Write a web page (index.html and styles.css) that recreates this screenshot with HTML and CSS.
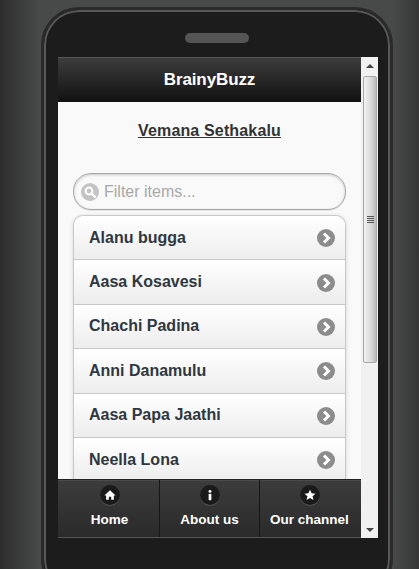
FILE: index.html
```html
<!DOCTYPE html>
<html lang="en">
<head>
    <meta charset="UTF-8">
    <meta name="viewport" content="width=device-width, initial-scale=1.0">
    <title>BrainyBuzz</title>
    <link rel="stylesheet" href="styles.css">
</head>
<body>
    <div class="stage">
    <div class="phone">
        <div class="speaker"></div>
        <div class="screen">
            <div class="page">
                <div class="header">BrainyBuzz</div>
                <div class="content">
                    <h2 class="book-title">Vemana Sethakalu</h2>

                    <div class="filter">
                        <span class="filter-icon">
                            <svg width="18" height="18" viewBox="0 0 18 18">
                                <circle cx="9" cy="9" r="9" fill="#c4c4c4"/>
                                <circle cx="8" cy="8" r="3.4" fill="none" stroke="#fff" stroke-width="2"/>
                                <path d="M10.5 10.5L14 14" stroke="#fff" stroke-width="2.4" stroke-linecap="round"/>
                            </svg>
                        </span>
                        <span class="filter-text">Filter items...</span>
                    </div>

                    <ul class="list">
                        <li class="list-item">Alanu bugga <span class="arrow"><svg width="18" height="18" viewBox="0 0 18 18"><path d="M7 4.5L11.5 9L7 13.5" fill="none" stroke="#fff" stroke-width="3"/></svg></span></li>
                        <li class="list-item">Aasa Kosavesi <span class="arrow"><svg width="18" height="18" viewBox="0 0 18 18"><path d="M7 4.5L11.5 9L7 13.5" fill="none" stroke="#fff" stroke-width="3"/></svg></span></li>
                        <li class="list-item">Chachi Padina <span class="arrow"><svg width="18" height="18" viewBox="0 0 18 18"><path d="M7 4.5L11.5 9L7 13.5" fill="none" stroke="#fff" stroke-width="3"/></svg></span></li>
                        <li class="list-item">Anni Danamulu <span class="arrow"><svg width="18" height="18" viewBox="0 0 18 18"><path d="M7 4.5L11.5 9L7 13.5" fill="none" stroke="#fff" stroke-width="3"/></svg></span></li>
                        <li class="list-item">Aasa Papa Jaathi <span class="arrow"><svg width="18" height="18" viewBox="0 0 18 18"><path d="M7 4.5L11.5 9L7 13.5" fill="none" stroke="#fff" stroke-width="3"/></svg></span></li>
                        <li class="list-item">Neella Lona <span class="arrow"><svg width="18" height="18" viewBox="0 0 18 18"><path d="M7 4.5L11.5 9L7 13.5" fill="none" stroke="#fff" stroke-width="3"/></svg></span></li>
                    </ul>
                </div>

                <div class="footer">
                    <a class="tab">
                        <span class="tab-icon">
                            <svg width="12" height="12" viewBox="0 0 14 14"><path d="M7 1.5L13.5 7.5H11.5V12.5H8.4V9H5.6V12.5H2.5V7.5H0.5Z" fill="#fff"/></svg>
                        </span>
                        Home
                    </a>
                    <a class="tab">
                        <span class="tab-icon">
                            <svg width="12" height="12" viewBox="0 0 14 14"><circle cx="7" cy="2.8" r="1.7" fill="#fff"/><rect x="5.4" y="5.6" width="3.2" height="7.4" rx="0.8" fill="#fff"/></svg>
                        </span>
                        About us
                    </a>
                    <a class="tab">
                        <span class="tab-icon">
                            <svg width="12" height="12" viewBox="0 0 14 14"><path d="M7 0.8L8.9 4.9L13.4 5.4L10 8.4L11 12.9L7 10.6L3 12.9L4 8.4L0.6 5.4L5.1 4.9Z" fill="#fff"/></svg>
                        </span>
                        Our channel
                    </a>
                </div>
            </div>

            <div class="scrollbar">
                <div class="scroll-btn"><span class="tri-up"></span></div>
                <div class="scroll-track">
                    <div class="scroll-thumb"><span class="grip"></span></div>
                </div>
                <div class="scroll-btn"><span class="tri-down"></span></div>
            </div>
        </div>
    </div>
    </div>
</body>
</html>
```

FILE: styles.css
```css
* {
    margin: 0;
    padding: 0;
    box-sizing: border-box;
}

html, body {
    height: 100%;
    overflow: hidden;
}

body {
    font-family: "Liberation Sans", Arial, sans-serif;
    background: linear-gradient(90deg, #2c2d2c 0, #484a49 40px, #484a49 393px, #353635 419px);
}

/* the phone runs off the bottom of the window, so clip it here */
.stage {
    height: 100vh;
    padding-top: 7px;
    overflow: hidden;
}

.phone {
    width: 352px;
    height: 590px;
    margin-left: 41px;
    padding-top: 23px;
    background: #1c1c1c;
    border: 3px solid #2a2a2a;
    border-radius: 38px;
    box-shadow: inset 0 0 0 2px #585858;
}

.speaker {
    width: 64px;
    height: 10px;
    margin: 0 0 14px 141px;
    background: #555;
    border-radius: 5px;
}

.screen {
    display: flex;
    width: 320px;
    height: 481px;
    margin-left: 14px;
}

.page {
    position: relative;
    width: 303px;
    overflow: hidden;
    background: #f9f9f9;
}

.header {
    height: 45px;
    line-height: 43px;
    text-align: center;
    font-size: 17px;
    font-weight: bold;
    letter-spacing: -0.1px;
    color: #fff;
    background: linear-gradient(#3c3c3c, #111);
    border-top: 1px solid #555;
}

.content {
    padding: 0 15px;
}

.book-title {
    padding-top: 19px;
    text-align: center;
    font-size: 16px;
    line-height: 19px;
    font-weight: bold;
    color: #333;
    text-decoration: underline;
    letter-spacing: 0.15px;
}

.filter {
    display: flex;
    align-items: center;
    gap: 5px;
    height: 37px;
    margin-top: 33px;
    padding-left: 7px;
    background: #f9f9f9;
    border: 1px solid #a8a8a8;
    border-radius: 18px;
    box-shadow: inset 0 1px 3px rgba(0, 0, 0, 0.2), 0 1px 0 #e4e4e4;
}

.filter-icon {
    display: flex;
}

.filter-text {
    font-size: 16px;
    color: #a8a8a8;
}

.list {
    list-style: none;
    margin-top: 5px;
    background: #fff;
    border: 1px solid #c8c8c8;
    border-bottom: 0;
    border-radius: 10px 10px 0 0;
    box-shadow: 0 1px 4px rgba(0, 0, 0, 0.15);
}

.list-item {
    display: flex;
    justify-content: space-between;
    align-items: center;
    height: 44.4px;
    padding: 0 10px 0 15px;
    font-size: 16px;
    font-weight: bold;
    color: #2f3740;
    background: linear-gradient(#fff, #ededed);
    border-bottom: 1px solid #c8c8c8;
}

.list-item:first-child {
    border-radius: 10px 10px 0 0;
}

.arrow {
    display: flex;
    width: 18px;
    height: 18px;
    margin-top: 1px;
    background: #8c8c8c;
    border-radius: 50%;
}

.footer {
    position: absolute;
    left: 0;
    right: 0;
    bottom: 0;
    height: 59px;
    display: flex;
    padding-right: 2px;
    background: linear-gradient(#3c3c3c, #2a2a2a);
    border-top: 1px solid #222;
    border-bottom: 1px solid #555;
    box-shadow: inset 0 1px 0 #4a4a4a;
}

.tab {
    display: flex;
    flex: 1;
    flex-direction: column;
    align-items: center;
    gap: 7px;
    padding-top: 5px;
    font-size: 13.5px;
    font-weight: bold;
    color: #fff;
    border-left: 1px solid #161616;
}

.tab:first-child {
    padding-left: 2px;
    border-left: 0;
}

.tab-icon {
    display: flex;
    align-items: center;
    justify-content: center;
    width: 20px;
    height: 20px;
    background: #1a1a1a;
    border-radius: 50%;
    box-shadow: 0 1px 0 #555;
}

.scrollbar {
    display: flex;
    flex-direction: column;
    width: 17px;
    background: #f1f1f1;
}

.scroll-btn {
    display: flex;
    align-items: center;
    justify-content: center;
    height: 17px;
}

.tri-up {
    border: 4px solid transparent;
    border-top: 0;
    border-bottom: 4px solid #444;
}

.tri-down {
    border: 4px solid transparent;
    border-bottom: 0;
    border-top: 4px solid #444;
}

.scroll-track {
    flex: 1;
    padding: 2px 1px 0 2px;
}

.scroll-thumb {
    display: flex;
    align-items: center;
    justify-content: center;
    height: 287px;
    background: linear-gradient(90deg, #f2f2f2, #d8d8d8 60%, #bbb);
    border: 1px solid #a8a8a8;
    border-radius: 2px;
}

.grip {
    width: 7px;
    height: 8px;
    background: repeating-linear-gradient(#555 0, #555 1px, transparent 1px, transparent 2px);
}
```
